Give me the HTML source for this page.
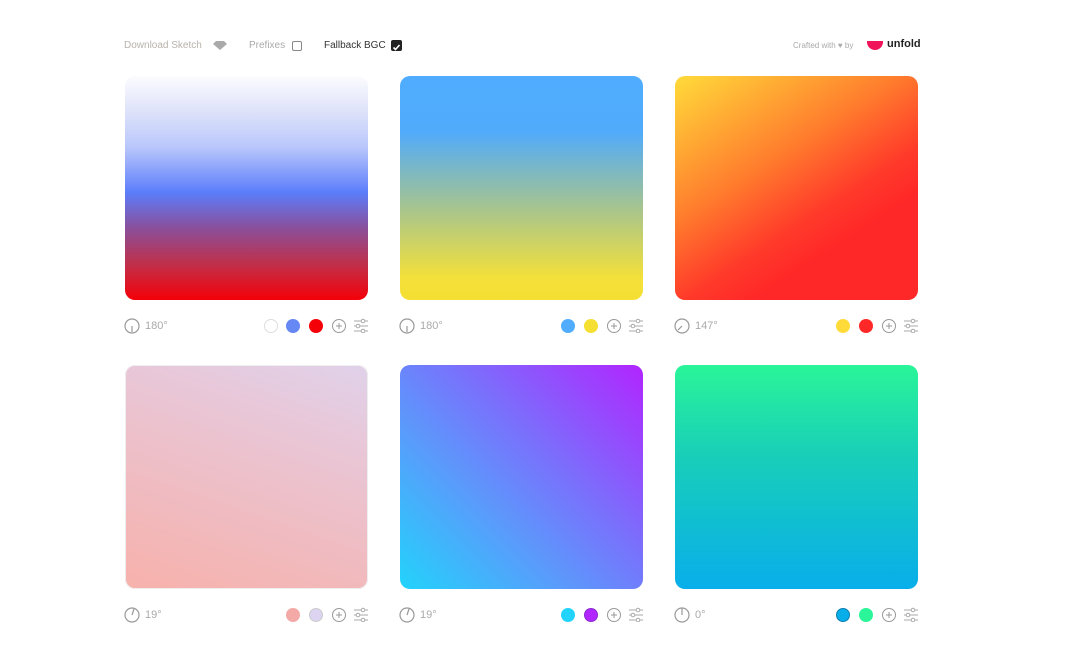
<!DOCTYPE html>
<html><head><meta charset="utf-8"><style>
body{margin:0;width:1067px;height:650px;background:#fff;font-family:"Liberation Sans",sans-serif;position:relative;overflow:hidden}
.t{position:absolute;font-size:10px;white-space:nowrap}
.card{position:absolute;width:243px;height:224px;border-radius:10px}
.ctl{position:absolute;height:20px;width:243px}
.ang{position:absolute;left:0;top:2px}
.deg{position:absolute;left:21px;top:4px;font-size:11px;color:#aaa}
.sw{position:absolute;top:3px;width:14px;height:14px;border-radius:50%;box-sizing:border-box}
.ic{position:absolute;top:1px}
</style></head><body>
<div class="t" style="left:124px;top:40px;color:#b8b2aa">Download Sketch</div>
<svg style="position:absolute;left:213px;top:41px" width="14" height="9" viewBox="0 0 14 9"><path d="M3 0h8l3 3-7 6-7-6z" fill="#aaa"/></svg>
<div class="t" style="left:249px;top:40px;color:#aaa">Prefixes</div>
<div style="position:absolute;left:292px;top:41px;width:8px;height:8px;border:1px solid #888;border-radius:2px"></div>
<div class="t" style="left:324px;top:40px;color:#333">Fallback BGC</div>
<div style="position:absolute;left:391px;top:40px;width:11px;height:11px;background:#222;border-radius:2px"><svg width="11" height="11" viewBox="0 0 11 11"><path d="M2.5 5.5l2 2 4-4.5" stroke="#fff" stroke-width="1.6" fill="none"/></svg></div>
<div class="t" style="left:793px;top:41px;font-size:8px;color:#aaa">Crafted with <span style="color:#aaa">♥</span> by</div>
<div style="position:absolute;left:867px;top:41px;width:16px;height:9px;background:#f0145a;border-radius:0 0 8px 8px"></div>
<div class="t" style="left:887px;top:38px;font-size:11px;font-weight:bold;color:#222">unfold</div>

<div class="card" style="left:125px;top:76px;background:linear-gradient(180deg,#fcfcfe 0%,#e0e4fa 15%,#b8c6fb 32%,#5b7dfb 52%,#8a4f9a 68%,#c0304a 84%,#f40008 100%)"></div>
<div class="card" style="left:400px;top:76px;background:linear-gradient(180deg,#4facfe 0%,#51abfb 25%,#a9c58c 60%,#f3e03a 90%,#f5df33 100%)"></div>
<div class="card" style="left:675px;top:76px;background:linear-gradient(147deg,#ffdb3a 0%,#ff7d2d 38%,#ff3a2a 60%,#ff2828 72%,#ff2828 100%)"></div>
<div class="card" style="left:125px;top:365px;background:linear-gradient(19deg,#f7b1ab 0%,#e9c6d6 70%,#e0d2ea 100%);box-shadow:inset 0 0 0 1px #eee"></div>
<div class="card" style="left:400px;top:365px;background:linear-gradient(45deg,#22d3fb 0%,#5a9bfb 35%,#7a70fc 60%,#b125ff 100%)"></div>
<div class="card" style="left:675px;top:365px;background:linear-gradient(180deg,#2af598 0%,#19cfb8 40%,#08aeea 100%)"></div>

<div class="ctl" style="left:124px;top:316px">
<svg class="ang" width="16" height="16" viewBox="0 0 16 16"><circle cx="8" cy="8" r="7" stroke="#999" stroke-width="1.2" fill="none"/><path d="M8 8v6" stroke="#999" stroke-width="1.2"/></svg><div class="deg">180°</div>
<div class="sw" style="left:140px;border:1.5px solid #ddd"></div><div class="sw" style="left:162px;background:#6688f5"></div><div class="sw" style="left:185px;background:#f40008"></div>
<svg class="ic" style="left:207px" width="16" height="16"><circle cx="8" cy="9" r="6.5" stroke="#999" fill="none"/><path d="M8 6v6M5 9h6" stroke="#999"/></svg>
<svg class="ic" style="left:229px" width="16" height="16"><path d="M1 4h14M1 9h14M1 14h14" stroke="#aaa"/><circle cx="10" cy="4" r="1.8" fill="#fff" stroke="#aaa"/><circle cx="5" cy="9" r="1.8" fill="#fff" stroke="#aaa"/><circle cx="10" cy="14" r="1.8" fill="#fff" stroke="#aaa"/></svg>
</div>
<div class="ctl" style="left:399px;top:316px">
<svg class="ang" width="16" height="16" viewBox="0 0 16 16"><circle cx="8" cy="8" r="7" stroke="#999" stroke-width="1.2" fill="none"/><path d="M8 8v6" stroke="#999" stroke-width="1.2"/></svg><div class="deg">180°</div>
<div class="sw" style="left:162px;background:#4facfe"></div><div class="sw" style="left:185px;background:#f5df33"></div>
<svg class="ic" style="left:207px" width="16" height="16"><circle cx="8" cy="9" r="6.5" stroke="#999" fill="none"/><path d="M8 6v6M5 9h6" stroke="#999"/></svg>
<svg class="ic" style="left:229px" width="16" height="16"><path d="M1 4h14M1 9h14M1 14h14" stroke="#aaa"/><circle cx="10" cy="4" r="1.8" fill="#fff" stroke="#aaa"/><circle cx="5" cy="9" r="1.8" fill="#fff" stroke="#aaa"/><circle cx="10" cy="14" r="1.8" fill="#fff" stroke="#aaa"/></svg>
</div>
<div class="ctl" style="left:674px;top:316px">
<svg class="ang" width="16" height="16" viewBox="0 0 16 16"><circle cx="8" cy="8" r="7" stroke="#999" stroke-width="1.2" fill="none"/><path d="M8 8l-4 4" stroke="#999" stroke-width="1.2"/></svg><div class="deg">147°</div>
<div class="sw" style="left:162px;background:#ffdb3a"></div><div class="sw" style="left:185px;background:#ff2828"></div>
<svg class="ic" style="left:207px" width="16" height="16"><circle cx="8" cy="9" r="6.5" stroke="#999" fill="none"/><path d="M8 6v6M5 9h6" stroke="#999"/></svg>
<svg class="ic" style="left:229px" width="16" height="16"><path d="M1 4h14M1 9h14M1 14h14" stroke="#aaa"/><circle cx="10" cy="4" r="1.8" fill="#fff" stroke="#aaa"/><circle cx="5" cy="9" r="1.8" fill="#fff" stroke="#aaa"/><circle cx="10" cy="14" r="1.8" fill="#fff" stroke="#aaa"/></svg>
</div>
<div class="ctl" style="left:124px;top:605px">
<svg class="ang" width="16" height="16" viewBox="0 0 16 16"><circle cx="8" cy="8" r="7" stroke="#999" stroke-width="1.2" fill="none"/><path d="M8 8l2-6" stroke="#999" stroke-width="1.2"/></svg><div class="deg">19°</div>
<div class="sw" style="left:162px;background:#f3a9a6"></div><div class="sw" style="left:185px;background:#dcd4f0;border:1px solid #ccc"></div>
<svg class="ic" style="left:207px" width="16" height="16"><circle cx="8" cy="9" r="6.5" stroke="#999" fill="none"/><path d="M8 6v6M5 9h6" stroke="#999"/></svg>
<svg class="ic" style="left:229px" width="16" height="16"><path d="M1 4h14M1 9h14M1 14h14" stroke="#aaa"/><circle cx="10" cy="4" r="1.8" fill="#fff" stroke="#aaa"/><circle cx="5" cy="9" r="1.8" fill="#fff" stroke="#aaa"/><circle cx="10" cy="14" r="1.8" fill="#fff" stroke="#aaa"/></svg>
</div>
<div class="ctl" style="left:399px;top:605px">
<svg class="ang" width="16" height="16" viewBox="0 0 16 16"><circle cx="8" cy="8" r="7" stroke="#999" stroke-width="1.2" fill="none"/><path d="M8 8l2-6" stroke="#999" stroke-width="1.2"/></svg><div class="deg">19°</div>
<div class="sw" style="left:162px;background:#22d3fb"></div><div class="sw" style="left:185px;background:#b125ff;border:1.5px solid #8a2bd0"></div>
<svg class="ic" style="left:207px" width="16" height="16"><circle cx="8" cy="9" r="6.5" stroke="#999" fill="none"/><path d="M8 6v6M5 9h6" stroke="#999"/></svg>
<svg class="ic" style="left:229px" width="16" height="16"><path d="M1 4h14M1 9h14M1 14h14" stroke="#aaa"/><circle cx="10" cy="4" r="1.8" fill="#fff" stroke="#aaa"/><circle cx="5" cy="9" r="1.8" fill="#fff" stroke="#aaa"/><circle cx="10" cy="14" r="1.8" fill="#fff" stroke="#aaa"/></svg>
</div>
<div class="ctl" style="left:674px;top:605px">
<svg class="ang" width="16" height="16" viewBox="0 0 16 16"><circle cx="8" cy="8" r="7" stroke="#999" stroke-width="1.2" fill="none"/><path d="M8 8V1" stroke="#999" stroke-width="1.2"/></svg><div class="deg">0°</div>
<div class="sw" style="left:162px;background:#08aeea;border:1.5px solid #0a7fb0"></div><div class="sw" style="left:185px;background:#2af598"></div>
<svg class="ic" style="left:207px" width="16" height="16"><circle cx="8" cy="9" r="6.5" stroke="#999" fill="none"/><path d="M8 6v6M5 9h6" stroke="#999"/></svg>
<svg class="ic" style="left:229px" width="16" height="16"><path d="M1 4h14M1 9h14M1 14h14" stroke="#aaa"/><circle cx="10" cy="4" r="1.8" fill="#fff" stroke="#aaa"/><circle cx="5" cy="9" r="1.8" fill="#fff" stroke="#aaa"/><circle cx="10" cy="14" r="1.8" fill="#fff" stroke="#aaa"/></svg>
</div>
</body></html>
